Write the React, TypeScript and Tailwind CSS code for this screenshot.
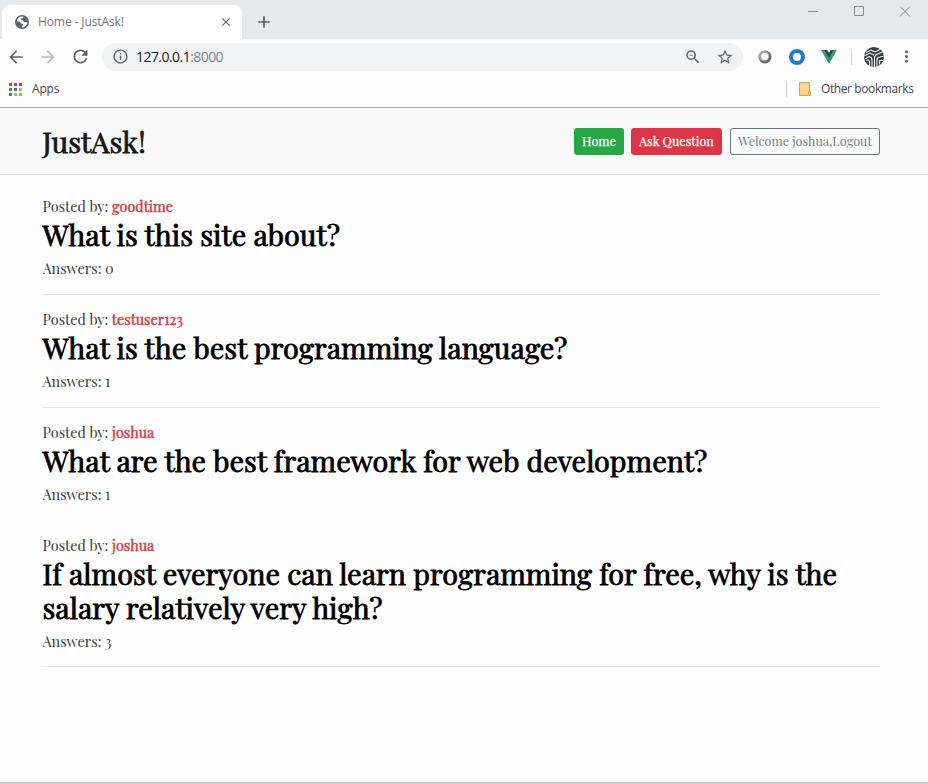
import React from "react";
import {
  MdArrowBack, MdArrowForward, MdRefresh, MdInfoOutline,
  MdZoomOut, MdStarBorder, MdMoreVert, MdAdd, MdClose,
} from "react-icons/md";

function Globe() {
  return (
    <svg className="size-[14px]" viewBox="0 0 14 14">
      <circle cx="7" cy="7" r="7" fill="#5f6368" />
      <path d="M8.200 1.600L7.800 3.200 5.800 3.800 5.600 5 8 5.600 9.200 7.200 12.400 7.300A5.400 5.400 0 0 1 7 12.400L6.600 11 8.300 10.300 8 9 5.800 8.200 4.600 6.600 1.700 6.400A5.400 5.400 0 0 1 8.200 1.600z" fill="#fff" />
    </svg>
  );
}

function TabStrip() {
  return (
    <div className="flex h-[39px] justify-between bg-[#e6e9ec] pl-0.5">
      <div className="flex">
        <div className="mt-[5px] flex h-[34px] w-[240px] items-center rounded-t-lg bg-white pl-[13px] pr-[9px]">
          <Globe />
          <span className="ml-[9px] grow text-[12px] tracking-[-0.1px] text-[#6c7378]">Home - JustAsk!</span>
          <MdClose className="size-[14px] text-[#5f6368]" />
        </div>
        <MdAdd className="ml-3 mt-[12px] size-5 text-[#5a5e62]" />
      </div>
      <svg className="mr-[16px] mt-[4px] h-[14px] w-[106px]" viewBox="0 0 106 14" fill="none" stroke="#878c93" strokeWidth="1">
        <path d="M2 7.5h10M48.500 2.500h9v9h-9zM94 2.500l10 10M104 2.500l-10 10" />
      </svg>
    </div>
  );
}

function Avatar() {
  return (
    <svg className="size-5" viewBox="0 0 20 20">
      <clipPath id="avatar"><circle cx="10" cy="10" r="10" /></clipPath>
      <g clipPath="url(#avatar)" fill="none" stroke="#f4f6f6" strokeWidth="1.100">
        <rect width="20" height="20" fill="#343d3e" stroke="none" />
        <path d="M2 5.500l5-2.500 4 2 6-3M0 9l6-3 4 2M1 12l4-2.500q3 .5 3 3.500v7M2.500 13.500q3-1.500 3 2v4M10.500 20V11q0-3 3-4l6-2.500M13 20v-7q0-3 3-3l4-1M15.500 13.500h4M15.500 13.500v4" />
      </g>
    </svg>
  );
}

function Toolbar() {
  return (
    <div className="flex h-[35px] items-center pl-[6px] text-[#5f6368]">
      <MdArrowBack className="size-5" />
      <MdArrowForward className="ml-[12px] size-5 text-[#b9bbbe]" />
      <MdRefresh className="ml-[12px] size-[21px]" />
      <div className="ml-[11px] flex h-7 w-[641px] items-center rounded-full bg-[#f1f2f4] pl-[9.500px] pr-[9px]">
        <MdInfoOutline className="size-[17px]" />
        <span className="ml-[7.500px] grow text-[14px] tracking-[-0.55px] text-[#202124]">127.0.0.1<span className="text-[#80868b]">:8000</span></span>
        <MdZoomOut className="size-[18px]" />
        <MdStarBorder className="ml-[14px] size-[18px]" />
      </div>
      <svg className="ml-[15px] size-[14px]" viewBox="0 0 14 14">
        <circle cx="7" cy="7" r="6.500" fill="#67676d" />
        <circle cx="6" cy="6" r="5.200" fill="#a3a3a8" />
        <circle cx="6.800" cy="6.500" r="3.600" fill="#f3f3f5" />
      </svg>
      <svg className="ml-[17px] size-4" viewBox="0 0 16 16">
        <circle cx="8" cy="8" r="6" fill="#fff" stroke="#1a7ec6" strokeWidth="4" />
      </svg>
      <svg className="ml-4 h-[14px] w-4" viewBox="0 0 16 14">
        <path d="M0 0h3l5 8 5-8h3L8 14z" fill="#2d9a72" />
        <path d="M3 0h3.300L8 3l1.700-3H13L8 8.500z" fill="#34454c" />
      </svg>
      <div className="ml-[14px] h-4 w-px bg-[#cfd0d8]" />
      <div className="ml-[12px]"><Avatar /></div>
      <MdMoreVert className="ml-[13px] size-[19px]" />
    </div>
  );
}

const appDots = [
  "bg-[#dc3545]", "bg-[#dc3545]", "bg-[#dc3545]",
  "bg-[#2a9d4a]", "bg-[#1a7ec6]", "bg-[#e09b4f]",
  "bg-[#2a9d4a]", "bg-[#e09b4f]", "bg-[#e09b4f]",
];

function Bookmarks() {
  return (
    <div className="flex h-[34px] items-center justify-between border-b border-[#adadad] pl-[9px] pr-[14.500px] pb-[3px] text-[12px] text-[#45494d]">
      <div className="flex items-center">
        <div className="grid grid-cols-3 gap-[2px]">
          {appDots.map((c, i) => <div key={i} className={"size-[3px] " + c} />)}
        </div>
        <span className="ml-[10px] tracking-[-0.2px]">Apps</span>
      </div>
      <div className="flex items-center">
        <div className="h-4 w-px bg-[#cfd0d8]" />
        <svg className="ml-[12px] h-[14px] w-[12px]" viewBox="0 0 12 14" fill="#fbd58f" stroke="#e3a049">
          <path d="M.5.500h10v13H.5z" /><path d="M9.500 9.500h2v4h-2z" />
        </svg>
        <span className="ml-[9.500px] tracking-[-0.4px]">Other bookmarks</span>
      </div>
    </div>
  );
}

function SiteHeader() {
  return (
    <header className="flex h-[67px] items-center justify-between border-b border-[#d9dadb] bg-[#f9f9f9] pl-[42.500px] pr-[48px] font-['Playfair_Display','Liberation_Serif',serif]">
      <h1 className="text-[28.8px] leading-[38px] text-[#16181a] [-webkit-text-stroke:0.8px_#16181a]">JustAsk!</h1>
      <nav className="flex items-center whitespace-nowrap text-[12.6px] leading-[23px]">
        <a className="h-[27px] w-[50px] rounded-[3px] border border-[#28a745] bg-[#28a745] text-center text-white [-webkit-text-stroke:0.25px_white]">Home</a>
        <a className="ml-[7px] h-[27px] w-[91px] rounded-[3px] border border-[#dc3545] bg-[#dc3545] text-center text-white [-webkit-text-stroke:0.25px_white]">Ask Question</a>
        <a className="ml-2 h-[27px] w-[150px] rounded-[3px] border border-[#6c757d] text-center text-[#757e84]">Welcome joshua,Logout</a>
      </nav>
    </header>
  );
}

type Q = { author: string; title: string; answers: number; rule: string };

const questions: Q[] = [
  { author: "goodtime", title: "What is this site about?", answers: 0, rule: "mt-[14px] border-[#e5e5e6]" },
  { author: "testuser123", title: "What is the best programming language?", answers: 1, rule: "mt-[14px] border-[#e5e5e6]" },
  { author: "joshua", title: "What are the best framework for web development?", answers: 1, rule: "mt-[14px] border-transparent" },
  { author: "joshua", title: "If almost everyone can learn programming for free, why is the salary relatively very high?", answers: 3, rule: "mt-[13px] border-[#e5e5e6]" },
];

function Question({ author, title, answers, rule }: Q) {
  return (
    <article className="mb-[12px] text-[14.4px] leading-6 text-[#343c42]">
      <p className="h-[23px] pl-[0.500px]">Posted by: <span className="text-[#d9363e] [-webkit-text-stroke:0.4px_#d9363e]">{author}</span></p>
      <h2 className="pl-[0.500px] text-[28.8px] leading-[34px] text-black [-webkit-text-stroke:0.8px_black]">{title}</h2>
      <p className="mt-[5px] h-6 pl-[0.500px]">Answers: {answers}</p>
      <hr className={"border-t " + rule} />
    </article>
  );
}

export default function App() {
  return (
    <div className="flex h-[783px] w-[928px] flex-col overflow-hidden border-b border-[#c5c5c5] bg-[#fefefe] font-['Open_Sans','Noto_Sans',sans-serif]">
      <TabStrip />
      <Toolbar />
      <Bookmarks />
      <SiteHeader />
      <main className="pl-[42px] pr-[48px] pt-[19px] font-['Playfair_Display','Liberation_Serif',serif]">
        {questions.map((q, i) => <Question key={i} {...q} />)}
      </main>
    </div>
  );
}
